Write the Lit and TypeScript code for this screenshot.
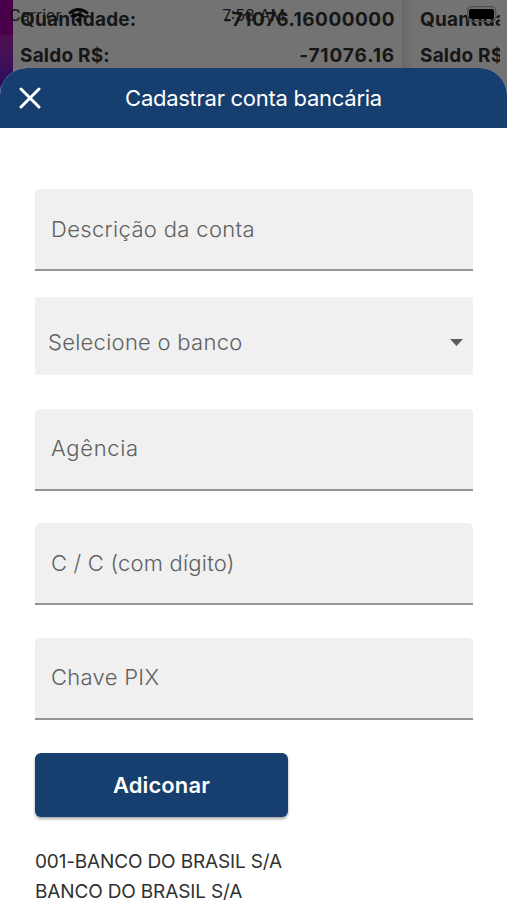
import { LitElement, html, css, svg } from "lit";
import { customElement, property } from "lit/decorators.js";

@customElement("account-field")
class AccountField extends LitElement {
  @property() label = "";
  @property({ type: Boolean, reflect: true }) select = false;

  static styles = css`
    :host {
      display: flex;
      align-items: center;
      justify-content: space-between;
      box-sizing: border-box;
      height: 82px;
      padding: 0 10px 1px 16px;
      background: #f0f0f0;
      border-bottom: 2px solid #949494;
      border-radius: 5px 5px 0 0;
      color: #606060;
      font: 300 22px/28px Inter, sans-serif;
      white-space: nowrap;
    }
    :host([select]) {
      height: 78px;
      padding: 12px 10px 0 13px;
      border-bottom: 0;
      border-radius: 1px;
    }
    .arrow {
      display: block;
      width: 13px;
      height: 7px;
    }
  `;

  render() {
    return html`<span>${this.label}</span>
      ${this.select
        ? html`<svg class="arrow" viewBox="0 0 13 7"><path d="M0 0H13L6.5 7Z" fill="#5c5c5c" /></svg>`
        : null}`;
  }
}

@customElement("app-root")
class AppRoot extends LitElement {
  static styles = css`
    :host {
      display: block;
      position: relative;
      width: 507px;
      height: 900px;
      overflow: hidden;
      background: #737373;
      font-family: Inter, sans-serif;
    }
    .behind {
      display: flex;
      height: 68px;
    }
    .photo {
      flex: none;
      width: 13px;
      height: 100px;
      background: linear-gradient(#48004b 0 34px, #4f1052 36px, #421057 60px, #290c5c 85px, #7aa0c8 96px);
    }
    .card {
      flex: none;
      box-sizing: border-box;
      width: 389px;
      padding: 2px 7px 0 7px;
      color: #161616;
      font-weight: 650;
      font-size: 19px;
      line-height: 36px;
      letter-spacing: 0.2px;
      white-space: nowrap;
    }
    .quantity {
      letter-spacing: 0.5px;
    }
    .balance {
      letter-spacing: 0.9px;
    }
    .gutter {
      flex: none;
      width: 11px;
      background: linear-gradient(90deg, #666, #6d6d6d 50%, #707070);
    }
    .next {
      width: 87px;
      padding-right: 0;
      padding-left: 7px;
      overflow: hidden;
    }
    .row {
      display: flex;
      justify-content: space-between;
    }
    .status {
      position: absolute;
      inset: 0 0 auto 0;
      display: grid;
      grid-template-columns: 1fr auto 1fr;
      align-items: center;
      height: 30px;
      padding: 0 9px;
      color: #161616;
      font-size: 16px;
    }
    .carrier {
      display: flex;
      align-items: center;
      gap: 7px;
    }
    .battery {
      justify-self: end;
      margin-top: -2px;
    }
    .sheet {
      position: absolute;
      inset: 68px 0 0 0;
      overflow: hidden;
      border-radius: 27px 27px 0 0;
      background: #fff;
    }
    header {
      display: grid;
      grid-template-columns: 60px 1fr 60px;
      align-items: center;
      height: 60px;
      background: #163e6e;
      color: #fff;
    }
    .close {
      display: block;
      margin-left: 19px;
    }
    h1 {
      margin: 0;
      text-align: center;
      font-weight: 400;
      font-size: 22px;
      letter-spacing: -0.27px;
      white-space: nowrap;
    }
    form {
      display: flex;
      flex-direction: column;
      padding: 61px 34px 0 35px;
    }
    .bank {
      margin: 26px 0 33.5px;
      letter-spacing: 0.27px;
    }
    .stack {
      display: flex;
      flex-direction: column;
      gap: 32.7px;
    }
    button {
      width: 253px;
      height: 64px;
      margin: 33px 0 0;
      padding: 0;
      border: 0;
      border-radius: 6px;
      background: #163e6e;
      box-shadow: 0 2px 3px rgba(0, 0, 0, 0.35);
      color: #fff;
      font: 600 22px Inter, sans-serif;
      letter-spacing: 0.1px;
    }
    .info {
      margin: 30px 0 0;
      color: #303030;
      font-size: 19px;
      line-height: 30px;
      letter-spacing: -0.15px;
    }
    .info p {
      margin: 0;
    }
    .description { letter-spacing: 0.34px; }
    .agency { letter-spacing: 0.65px; }
    .number { letter-spacing: 0.2px; }
    .pix { letter-spacing: 0.3px; }
  `;

  private wifi = svg`<svg width="21" height="15" viewBox="0 0 21 15" fill="none" stroke="#080808" stroke-width="2.7">
    <path d="M1 5.5Q10.5-2.5 20 5.5" /><path d="M4.6 9Q10.5 4 16.4 9" />
    <path d="M7.3 11.4Q10.5 9 13.7 11.4L10.5 15Z" fill="#080808" stroke="none" /></svg>`;

  render() {
    return html`
      <div class="behind">
        <div class="photo"></div>
        <div class="card">
          <div class="row"><span>Quantidade:</span><span class="quantity">-71076.16000000</span></div>
          <div class="row"><span>Saldo R$:</span><span class="balance">-71076.16</span></div>
        </div>
        <div class="gutter"></div>
        <div class="card next">
          <div>Quantidade:</div>
          <div>Saldo R$:</div>
        </div>
      </div>
      <div class="status">
        <div class="carrier"><span>Carrier</span>${this.wifi}</div>
        <span>7:58 AM</span>
        <svg class="battery" width="31" height="16" viewBox="0 0 31 16">
          <rect x=".6" y=".6" width="28" height="14.8" rx="4" fill="none" stroke="#505050" stroke-width="1.2" />
          <rect x="2" y="3" width="25" height="10" rx="2" fill="#000" />
          <path d="M29.8 5.5Q31 8 29.8 10.5Z" fill="#505050" />
        </svg>
      </div>
      <section class="sheet">
        <header>
          <svg class="close" width="22" height="22" viewBox="0 0 22 22">
            <path d="M2 2L20 20M20 2L2 20" stroke="#fff" stroke-width="3" stroke-linecap="round" />
          </svg>
          <h1>Cadastrar conta bancária</h1>
        </header>
        <form>
          <account-field class="description" label="Descrição da conta"></account-field>
          <account-field class="bank" label="Selecione o banco" select></account-field>
          <div class="stack">
            <account-field class="agency" label="Agência"></account-field>
            <account-field class="number" label="C / C (com dígito)"></account-field>
            <account-field class="pix" label="Chave PIX"></account-field>
          </div>
          <button type="button">Adiconar</button>
          <div class="info">
            <p>001-BANCO DO BRASIL S/A</p>
            <p>BANCO DO BRASIL S/A</p>
          </div>
        </form>
      </section>
    `;
  }
}
